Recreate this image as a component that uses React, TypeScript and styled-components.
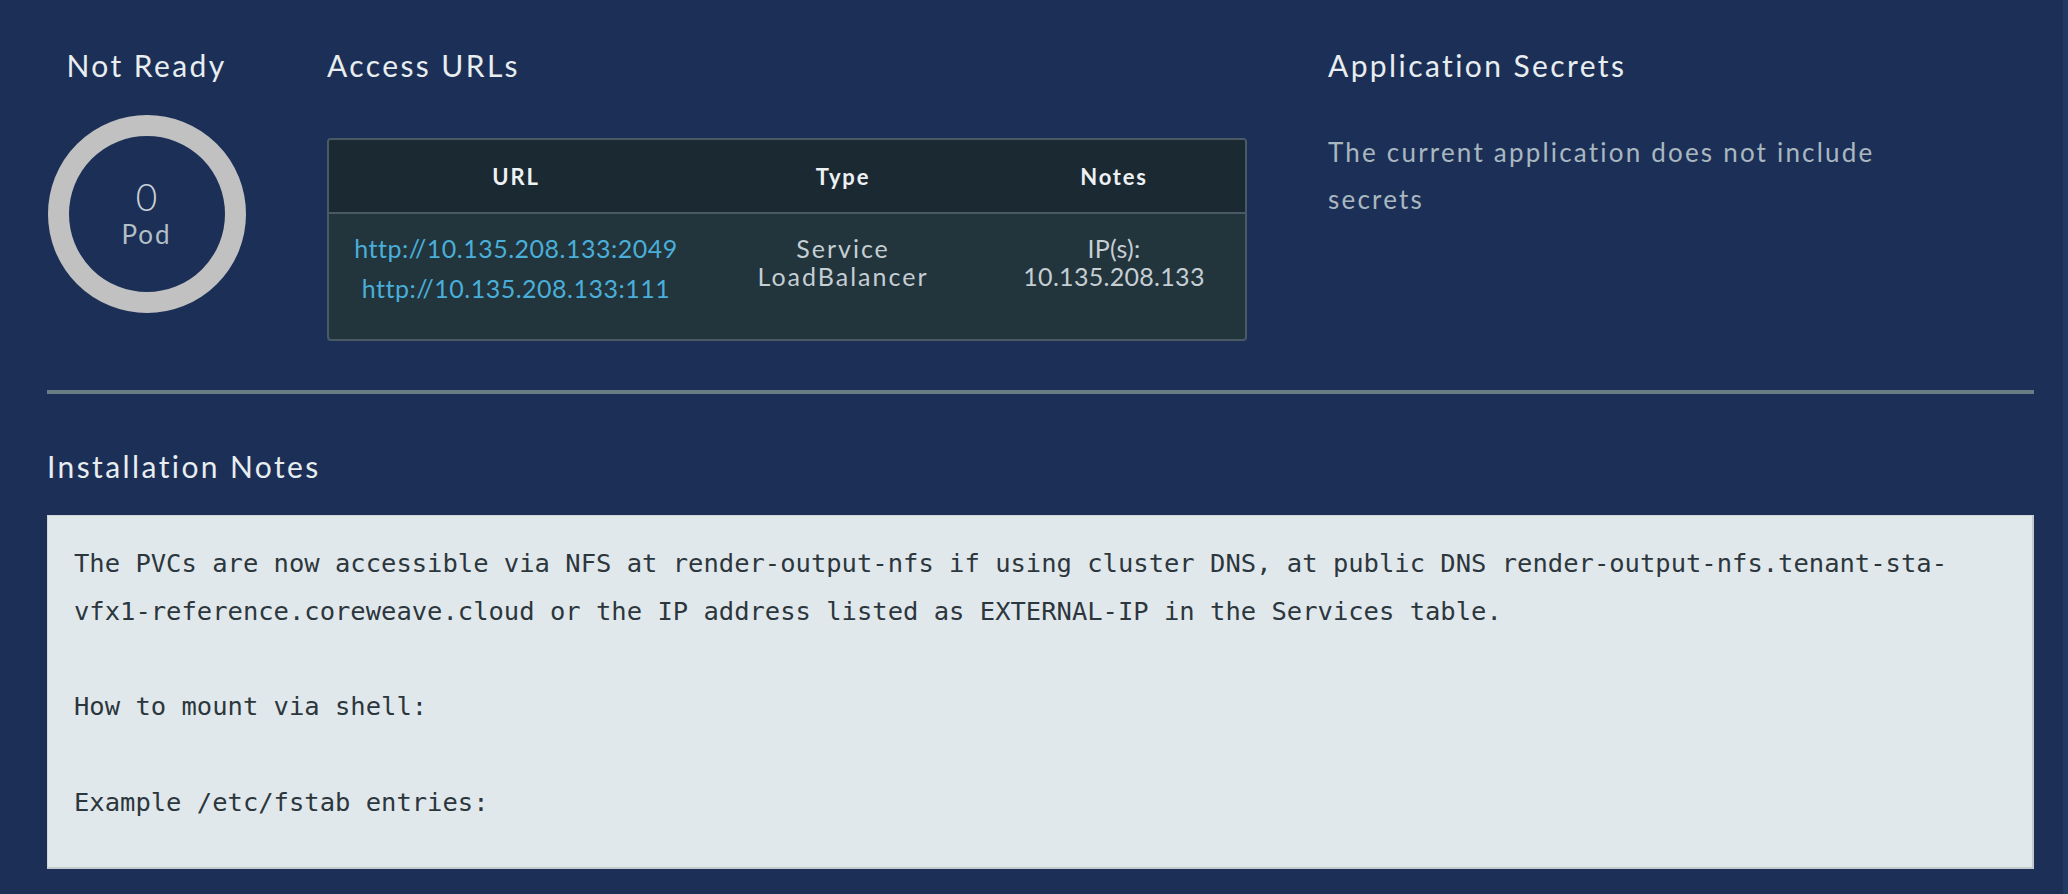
import styled, { createGlobalStyle } from 'styled-components';

const GlobalStyle = createGlobalStyle`
  html, body {
    margin: 0;
    padding: 0;
    background: #1c3057;
  }
  body {
    font-family: Lato, "Open Sans", sans-serif;
  }
`;

interface AccessUrl {
  urls: string[];
  type: string[];
  notes: string[];
}

const accessUrls: AccessUrl[] = [
  {
    urls: ['http://10.135.208.133:2049', 'http://10.135.208.133:111'],
    type: ['Service', 'LoadBalancer'],
    notes: ['IP(s):', '10.135.208.133'],
  },
];

const notes = [
  'The PVCs are now accessible via NFS at render-output-nfs if using cluster DNS, at public DNS render-output-nfs.tenant-sta-',
  'vfx1-reference.coreweave.cloud or the IP address listed as EXTERNAL-IP in the Services table.',
  '',
  'How to mount via shell:',
  '',
  'Example /etc/fstab entries:',
];

const App = () => {
  return (
    <Page>
      <GlobalStyle />
      <TopRow>
        <StatusColumn>
          <Heading>Not Ready</Heading>
          <PodRing>
            <PodCount>0</PodCount>
            <PodLabel>Pod</PodLabel>
          </PodRing>
        </StatusColumn>

        <UrlColumn>
          <Heading>Access URLs</Heading>
          <Table>
            <thead>
              <tr>
                <Th $width={374}>URL</Th>
                <Th $width={280}>Type</Th>
                <Th>Notes</Th>
              </tr>
            </thead>
            <tbody>
              {accessUrls.map((row, i) => (
                <tr key={i}>
                  <Td>
                    <UrlList>
                      {row.urls.map(u => (
                        <UrlLink key={u} href="#">{u}</UrlLink>
                      ))}
                    </UrlList>
                  </Td>
                  <Td>
                    {row.type.map(t => <CellLine key={t} $spacing={2}>{t}</CellLine>)}
                  </Td>
                  <Td>
                    {row.notes.map(n => <CellLine key={n} $spacing={0.3}>{n}</CellLine>)}
                  </Td>
                </tr>
              ))}
            </tbody>
          </Table>
        </UrlColumn>

        <SecretsColumn>
          <Heading>Application Secrets</Heading>
          <MutedText>The current application does not include secrets</MutedText>
        </SecretsColumn>
      </TopRow>

      <Divider />

      <NotesHeading>Installation Notes</NotesHeading>
      <CodeBox>{notes.join('\n')}</CodeBox>
    </Page>
  );
};

const Page = styled.div`
  min-height: 894px;
  box-sizing: border-box;
  padding: 47px 29px 20px 47px;
  background: #1c3057;
  color: #e8edf0;
  border-right: 5px solid #213a63;
`;

const TopRow = styled.div`
  display: flex;
  align-items: flex-start;
  gap: 81px;
`;

const Heading = styled.h2`
  margin: 0;
  font-size: 30px;
  line-height: 36px;
  font-weight: 400;
  color: #e8edf0;
  letter-spacing: 2.4px;
  white-space: nowrap;
`;

const StatusColumn = styled.div`
  width: 199px;
  display: flex;
  flex-direction: column;
  align-items: center;
  gap: 32px;
`;

const PodRing = styled.div`
  width: 198px;
  height: 198px;
  box-sizing: border-box;
  border-radius: 50%;
  border: 21px solid #c1c1c1;
  display: flex;
  flex-direction: column;
  align-items: center;
  justify-content: center;
  padding-bottom: 2px;
`;

const PodCount = styled.div`
  font-size: 37px;
  line-height: 40px;
  color: #c9d2d8;
  font-weight: 300;
`;

const PodLabel = styled.div`
  font-size: 26px;
  line-height: 30px;
  margin-top: 2px;
  color: #b3bfc6;
  letter-spacing: 2px;
`;

const UrlColumn = styled.div`
  width: 920px;
  display: flex;
  flex-direction: column;
  gap: 55px;
`;

const Table = styled.table`
  width: 920px;
  border-collapse: separate;
  border-spacing: 0;
  border: 2px solid #4a5a65;
  border-radius: 4px;
  overflow: hidden;
  background: #22343c;
`;

const Th = styled.th<{ $width?: number }>`
  ${p => (p.$width ? `width: ${p.$width}px;` : '')}
  height: 72px;
  padding: 0;
  background: #1b2932;
  border-bottom: 2px solid #4a5a65;
  font-size: 22px;
  font-weight: 700;
  letter-spacing: 1.8px;
  color: #eef1f3;
  text-align: center;
  vertical-align: middle;
`;

const Td = styled.td`
  height: 125px;
  box-sizing: border-box;
  padding: 20px 12px 0;
  vertical-align: top;
  text-align: center;
  color: #c5ced3;
  font-size: 25px;
`;

const UrlList = styled.div`
  margin-top: -6px;
`;

const UrlLink = styled.a`
  display: block;
  color: #49afd9;
  text-decoration: none;
  font-size: 25px;
  line-height: 40px;
  letter-spacing: 0.5px;
`;

const CellLine = styled.div<{ $spacing: number }>`
  line-height: 28px;
  letter-spacing: ${p => p.$spacing}px;
`;

const SecretsColumn = styled.div`
  width: 580px;
  display: flex;
  flex-direction: column;
  gap: 46px;
`;

const MutedText = styled.p`
  margin: 0;
  font-size: 26px;
  line-height: 47px;
  color: #a9b7c0;
  letter-spacing: 2.2px;
`;

const Divider = styled.hr`
  margin: 49px 0 0;
  border: none;
  height: 4px;
  background: #687d86;
`;

const NotesHeading = styled(Heading)`
  margin-top: 54px;
`;

const CodeBox = styled.pre`
  margin: 31px 0 0;
  height: 354px;
  box-sizing: border-box;
  padding: 24px 26px;
  background: #e1e8ec;
  border: 1px solid #cfd6da;
  border-right: 2px solid #c3c9cc;
  border-bottom: 2px solid #c3c9cc;
  font-family: "DejaVu Sans Mono", monospace;
  font-size: 25.5px;
  line-height: 47.8px;
  color: #2c373d;
  white-space: pre-wrap;
  overflow: hidden;
`;

export default App;
